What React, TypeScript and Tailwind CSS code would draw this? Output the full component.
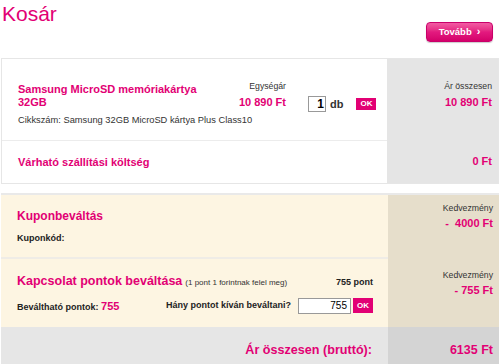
import React from "react";

const pink = "text-[#e20074]";

export default function App() {
  return (
    <div className="w-[500px] h-[364px] overflow-hidden bg-white font-[family-name:Liberation_Sans,Arial,sans-serif] text-[#333]">
      <h1 className={`text-[21px] leading-[24px] ${pink} pl-[2px] pt-[2px] m-0`}>Kosár</h1>
      <div className="flex justify-end pr-[7px] mt-[-4px]">
        <button className="w-[67px] h-[20px] rounded-[4px] border border-[#c9006a] bg-gradient-to-b from-[#f25aa3] via-[#e3197f] to-[#d4006a] text-white text-[9.5px] font-bold flex items-center justify-center gap-[5px] shadow-[0_1px_1px_rgba(0,0,0,0.2)]">
          <span>Tovább</span>
          <span className="text-[11px] leading-none mt-[-1px]">›</span>
        </button>
      </div>

      {/* Section 1 */}
      <div className="mt-[16px] mx-[1px] border border-[#e6e6e6] flex flex-col">
        <div className="flex h-[81px]">
          <div className="flex-1 flex items-start pl-[16px] pt-[22px]">
            <div className="w-[200px] mt-[2px]">
              <div className={`text-[11px] leading-[13px] font-bold ${pink}`}>Samsung MicroSD memóriakártya 32GB</div>
              <div className="text-[9.3px] leading-[12px] text-[#333] mt-[5px] whitespace-nowrap">Cikkszám: Samsung 32GB MicroSD kártya Plus Class10</div>
            </div>
            <div className="w-[68px] text-right">
              <div className="text-[8.7px] leading-[11px] text-[#333]">Egységár</div>
              <div className={`text-[11px] leading-[13px] font-bold ${pink} mt-[4px]`}>10 890 Ft</div>
            </div>
            <div className="ml-[22px] mt-[15px] flex items-center">
              <div className="w-[18px] h-[16px] border border-[#999] bg-white text-[12px] font-bold flex items-center justify-end pr-[1px] text-black">1</div>
              <span className="text-[11px] leading-[13px] font-bold text-[#333] ml-[4px]">db</span>
              <span className="ml-[13px] w-[20px] h-[12px] bg-[#e20074] text-white text-[8px] font-bold flex items-center justify-center">OK</span>
            </div>
          </div>
          <div className="w-[111px] bg-[#e5e5e5] text-right pr-[6px] pt-[22px]">
            <div className="text-[8.7px] leading-[11px] text-[#333]">Ár összesen</div>
            <div className={`text-[11px] leading-[13px] font-bold ${pink} mt-[4px]`}>10 890 Ft</div>
          </div>
        </div>
        <div className="flex h-[43px]">
          <div className="flex-1 border-t border-[#ececec] flex items-center pl-[16px]">
            <span className={`text-[11px] leading-[13px] font-bold ${pink}`}>Várható szállítási költség</span>
          </div>
          <div className="w-[111px] bg-[#e5e5e5] flex items-center justify-end pr-[6px]">
            <span className={`text-[11px] leading-[13px] font-bold ${pink}`}>0 Ft</span>
          </div>
        </div>
      </div>

      {/* Section 2 */}
      <div className="mt-[9px] mx-[1px] border-t-2 border-[#e9e9e9] flex flex-col">
        <div className="flex h-[62px]">
          <div className="flex-1 bg-[#fdf5e2] pl-[16px] pt-[14px]">
            <div className={`text-[12px] leading-[14px] font-bold ${pink}`}>Kuponbeváltás</div>
            <div className="text-[9px] leading-[11px] font-bold text-[#222] mt-[10px]">Kuponkód:</div>
          </div>
          <div className="w-[111px] bg-[#e6decb] text-right pr-[6px] pt-[7.5px]">
            <div className="text-[8.7px] leading-[11px] text-[#333]">Kedvezmény</div>
            <div className={`text-[11px] leading-[13px] font-bold ${pink} mt-[3px]`}>-&nbsp; 4000 Ft</div>
          </div>
        </div>
        <div className="flex h-[70px]">
          <div className="flex-1 bg-[#fdf5e2] border-t-2 border-[#efece6] pl-[16px] pr-[15px] pt-[15px]">
            <div className="flex items-baseline justify-between">
              <div className="flex items-baseline">
                <span className={`text-[12.5px] leading-[15px] font-bold ${pink}`}>Kapcsolat pontok beváltása</span>
                <span className="text-[8px] text-[#333] ml-[3px]">(1 pont 1 forintnak felel meg)</span>
              </div>
              <span className="text-[9px] font-bold text-[#222]">755 pont</span>
            </div>
            <div className="flex items-center justify-between mt-[8px]">
              <span className="text-[9px] font-bold text-[#222] whitespace-nowrap">
                Beváltható pontok: <span className={`text-[11px] ${pink}`}>755</span>
              </span>
              <div className="flex items-center">
                <span className="text-[9px] font-bold text-[#222] whitespace-nowrap">Hány pontot kíván beváltani?</span>
                <div className="ml-[7px] w-[53px] h-[16px] border border-[#999] bg-white text-[10px] flex items-center justify-end pr-[3px] text-black">755</div>
                <span className="ml-[2px] w-[20px] h-[15px] bg-[#e20074] text-white text-[8px] font-bold flex items-center justify-center">OK</span>
              </div>
            </div>
          </div>
          <div className="w-[111px] bg-[#e6decb] text-right pr-[6px] pt-[12.5px]">
            <div className="text-[8.7px] leading-[11px] text-[#333]">Kedvezmény</div>
            <div className={`text-[11px] leading-[13px] font-bold ${pink} mt-[3px]`}>- 755 Ft</div>
          </div>
        </div>
        <div className="flex h-[40px]">
          <div className="flex-1 bg-[#e6e6e6] flex justify-end pr-[16px] pt-[16px]">
            <span className={`text-[12.6px] leading-[15px] font-bold ${pink}`}>Ár összesen (bruttó):</span>
          </div>
          <div className="w-[111px] bg-[#d4d4d4] flex justify-end pr-[6px] pt-[16px]">
            <span className={`text-[12.5px] leading-[15px] font-bold ${pink}`}>6135 Ft</span>
          </div>
        </div>
      </div>
    </div>
  );
}
